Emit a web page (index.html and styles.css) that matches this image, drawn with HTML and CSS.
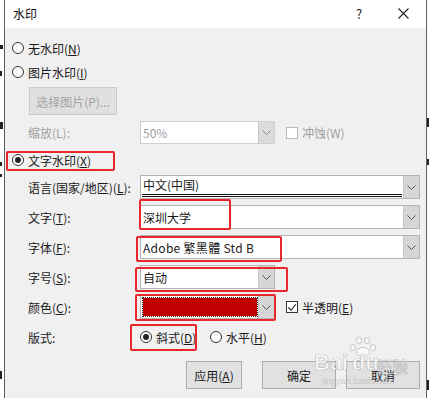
FILE: index.html
```html
<!DOCTYPE html>
<html lang="zh-CN">
<head>
<meta charset="utf-8">
<title>水印</title>
<link rel="stylesheet" href="styles.css">
</head>
<body>
<div class="page">
  <div class="gutter">
    <span class="frag f1"></span>
    <span class="frag f2"></span>
    <span class="frag f3"></span>
    <span class="frag f4"></span>
    <span class="frag f5"></span>
    <span class="frag f6"></span>
  </div>
  <div class="dialog">
    <div class="titlebar">
      <span class="title">水印</span>
      <span class="help">?</span>
      <svg class="close" width="11" height="11" viewBox="0 0 11 11"><path d="M0.5 0.5 L10.5 10.5 M10.5 0.5 L0.5 10.5" stroke="#222" stroke-width="1.1" fill="none"/></svg>
    </div>
    <div class="content">
      <div class="radio-row">
        <span class="radio"></span><span>无水印(<u>N</u>)</span>
      </div>
      <div class="radio-row">
        <span class="radio"></span><span>图片水印(<u>I</u>)</span>
      </div>
      <div class="btn-row">
        <div class="btn disabled">选择图片(P)...</div>
      </div>
      <div class="field-row scale-row">
        <span class="label disabled-text">缩放(L):</span>
        <div class="combo short disabled">
          <span class="combo-text disabled-text">50%</span>
          <span class="arrow"><svg width="9" height="5" viewBox="0 0 9 5"><polyline points="0.5,0.5 4.5,4.5 8.5,0.5" fill="none" stroke="#888" stroke-width="1"/></svg></span>
        </div>
        <span class="check"></span><span class="disabled-text">冲蚀(W)</span>
      </div>
      <div class="radio-row text-mark">
        <span class="radio on"></span><span>文字水印(<u>X</u>)</span>
        <span class="mark mark-textwm"></span>
      </div>
      <div class="form">
        <div class="field-row">
          <span class="label">语言(国家/地区)(<u>L</u>):</span>
          <div class="combo wide">
            <span class="combo-text lang-text">中文(中国)</span>
            <span class="dbl-line"></span>
            <span class="arrow"><svg width="9" height="5" viewBox="0 0 9 5"><polyline points="0.5,0.5 4.5,4.5 8.5,0.5" fill="none" stroke="#555" stroke-width="1"/></svg></span>
          </div>
        </div>
        <div class="field-row">
          <span class="label">文字(<u>T</u>):</span>
          <div class="combo wide">
            <span class="combo-text">深圳大学</span>
            <span class="arrow"><svg width="9" height="5" viewBox="0 0 9 5"><polyline points="0.5,0.5 4.5,4.5 8.5,0.5" fill="none" stroke="#555" stroke-width="1"/></svg></span>
            <span class="mark mark-text"></span>
          </div>
        </div>
        <div class="field-row">
          <span class="label">字体(<u>F</u>):</span>
          <div class="combo wide">
            <span class="combo-text font-name">Adobe 繁黑體 Std B</span>
            <span class="arrow"><svg width="9" height="5" viewBox="0 0 9 5"><polyline points="0.5,0.5 4.5,4.5 8.5,0.5" fill="none" stroke="#555" stroke-width="1"/></svg></span>
            <span class="mark mark-font"></span>
          </div>
        </div>
        <div class="field-row">
          <span class="label">字号(<u>S</u>):</span>
          <div class="combo short">
            <span class="combo-text">自动</span>
            <span class="arrow"><svg width="9" height="5" viewBox="0 0 9 5"><polyline points="0.5,0.5 4.5,4.5 8.5,0.5" fill="none" stroke="#555" stroke-width="1"/></svg></span>
            <span class="mark mark-size"></span>
          </div>
        </div>
        <div class="field-row">
          <span class="label">颜色(<u>C</u>):</span>
          <div class="combo short">
            <span class="swatch"></span>
            <span class="arrow"><svg width="9" height="5" viewBox="0 0 9 5"><polyline points="0.5,0.5 4.5,4.5 8.5,0.5" fill="none" stroke="#555" stroke-width="1"/></svg></span>
            <span class="mark mark-color"></span>
          </div>
          <span class="check on"><svg width="11" height="11" viewBox="0 0 11 11"><polyline points="1.5,5.5 4.5,8.5 9.5,2" fill="none" stroke="#222" stroke-width="1.2"/></svg></span><span>半透明(<u>E</u>)</span>
        </div>
        <div class="field-row layout-row">
          <span class="label">版式:</span>
          <div class="opt opt-diag">
            <span class="radio on"></span><span>斜式(<u>D</u>)</span>
            <span class="mark mark-diag"></span>
          </div>
          <div class="opt">
            <span class="radio"></span><span>水平(<u>H</u>)</span>
          </div>
        </div>
      </div>
      <div class="actions">
        <div class="btn act apply">应用(<u>A</u>)</div>
        <div class="btn act ok">确定</div>
        <div class="btn act cancel">取消</div>
      </div>
      <div class="wm">
        <span class="wm-paw">
          <span class="toe t1"></span><span class="toe t2"></span><span class="toe t3"></span><span class="toe t4"></span><span class="pad"></span>
        </span>
        <span class="wm-bai">Bai</span><span class="wm-du">du</span><span class="wm-jy">经验</span>
        <span class="wm-url">jingyan.baidu.com</span>
      </div>
    </div>
  </div>
  <div class="gutter gutter-right">
    <span class="frag r1"></span>
    <span class="frag r2"></span>
    <span class="frag r3"></span>
  </div>
</div>
</body>
</html>
```

FILE: styles.css
```css
* { box-sizing: border-box; }
html, body { margin: 0; padding: 0; }
body {
  width: 429px;
  height: 398px;
  overflow: hidden;
  background: #fff;
  font-family: "Noto Sans CJK SC", "Noto Sans", sans-serif;
  font-size: 12px;
  color: #1a1a1a;
}
u { text-decoration: underline; text-underline-offset: 1px; }

.page { display: flex; height: 398px; }
.gutter { width: 4px; display: flex; flex-direction: column; flex: none; }
.gutter-right { width: 2px; }
.frag { display: block; background: #222; }
.f1 { margin-top: 45px; width: 3px; height: 4px; }
.f2 { margin-top: 22px; width: 2px; height: 5px; }
.f3 { margin-top: 46px; width: 3px; height: 7px; }
.f4 { margin-top: 33px; width: 2px; height: 4px; }
.f5 { margin-top: 8px; width: 2px; height: 3px; }
.f6 { margin-top: 194px; width: 2px; height: 8px; }
.r1 { margin-top: 118px; width: 2px; height: 9px; }
.r2 { margin-top: 32px; width: 2px; height: 6px; }
.r3 { margin-top: 215px; width: 2px; height: 10px; }

.dialog {
  width: 423px;
  height: 398px;
  border-left: 1px solid #5f5f5f;
  border-right: 1px solid #5f5f5f;
  display: flex;
  flex-direction: column;
  flex: none;
}

.titlebar {
  height: 28px;
  background: #fff;
  display: flex;
  align-items: center;
  padding-left: 8px;
  padding-bottom: 2px;
}
.title { flex: 1; font-size: 12px; color: #111; }
.help { font-size: 13px; color: #222; width: 7px; margin-right: 35px; }
.close { margin-right: 17px; }

.content {
  position: relative;
  flex: 1;
  background: #f0f0f0;
  padding-top: 8px;
}

.radio-row {
  position: relative;
  height: 24px;
  display: flex;
  align-items: center;
  gap: 4px;
  padding-left: 7px;
}
.radio {
  width: 12px;
  height: 12px;
  border: 1px solid #333;
  border-radius: 50%;
  background: #fff;
  display: flex;
  align-items: center;
  justify-content: center;
  flex: none;
}
.radio.on::after {
  content: "";
  width: 6px;
  height: 6px;
  border-radius: 50%;
  background: #222;
}

.btn-row { margin-top: 3px; padding-left: 24px; }
.btn {
  height: 28px;
  border: 1px solid #adadad;
  background: #e1e1e1;
  display: flex;
  align-items: center;
  justify-content: center;
}
.btn.disabled {
  width: 88px;
  background: #e0e0e0;
  border-color: #cbcbcb;
  color: #a3a3a3;
}
.disabled-text { color: #a0a0a0; }

.field-row {
  position: relative;
  display: flex;
  align-items: center;
  height: 24px;
  padding-left: 23px;
}
.scale-row { margin-top: 6px; height: 23px; }
.label { width: 112px; flex: none; }

.combo {
  position: relative;
  height: 100%;
  border: 1px solid #b4b4b4;
  background: #fff;
  display: flex;
  align-items: center;
  flex: none;
}
.combo.short { width: 135px; }
.combo.wide { width: 280px; }
.combo.disabled { border-color: #cfcfcf; }
.combo-text { flex: 1; padding-left: 2px; white-space: nowrap; }
.lang-text { align-self: flex-start; line-height: 17px; }
.font-name { letter-spacing: 0.3px; }
.arrow {
  width: 16px;
  height: 100%;
  background: #d6d6d6;
  border-left: 1px solid #c8c8c8;
  display: flex;
  align-items: center;
  justify-content: center;
  flex: none;
}
.combo.disabled .arrow { background: #dcdcdc; }
.dbl-line {
  position: absolute;
  left: 1px;
  right: 17px;
  bottom: 1px;
  height: 3px;
  border-top: 1px solid #111;
  border-bottom: 1px solid #111;
}
.swatch {
  flex: 1;
  height: 18px;
  margin: 0 1px 0 2px;
  background: #c00000;
  outline: 1px dotted #222;
  outline-offset: 0;
}

.check {
  width: 12px;
  height: 12px;
  border: 1px solid #333;
  background: #fff;
  margin-left: 11px;
  margin-right: 4px;
  display: flex;
  align-items: center;
  justify-content: center;
  flex: none;
}
.scale-row .check { border-color: #b8b8b8; }

.text-mark { margin-top: 6px; height: 20px; }

.form {
  margin-top: 5px;
  display: flex;
  flex-direction: column;
  gap: 6px;
}

.layout-row .opt {
  position: relative;
  display: flex;
  align-items: center;
  gap: 4px;
}
.opt-diag { width: 70px; }

.mark {
  position: absolute;
  border: 2.5px solid #e8262b;
  border-radius: 2px;
  pointer-events: none;
}
.mark-textwm { left: 1px; top: 1px; width: 109px; height: 20px; }
.mark-text { left: -2px; top: -7px; width: 92px; height: 31px; }
.mark-font { left: -5px; top: 0px; width: 146px; height: 26px; }
.mark-size { left: -6px; top: 1px; width: 153px; height: 25px; }
.mark-color { left: -6px; top: -2px; width: 141px; height: 27px; }
.mark-diag { left: -10px; top: -5px; width: 67px; height: 27px; }

.actions {
  margin-top: 12px;
  display: flex;
  height: 28px;
}
.act { height: 28px; }
.apply { margin-left: 181px; width: 56px; }
.ok { margin-left: 20px; width: 74px; }
.cancel { margin-left: 10px; width: 74px; }

.wm {
  position: absolute;
  left: 305px;
  top: 308px;
  width: 100px;
  height: 56px;
  pointer-events: none;
  color: rgba(255,255,255,0.8);
  -webkit-text-stroke: 0.7px rgba(140,140,140,0.5);
  font-family: "Liberation Sans", sans-serif;
  font-weight: bold;
}
.wm-bai { position: absolute; left: 4px; top: 14px; font-size: 22px; }
.wm-du { position: absolute; left: 42px; top: 14px; font-size: 22px; }
.wm-jy { position: absolute; left: 66px; top: 18px; font-size: 16px; font-family: "Noto Sans CJK SC", sans-serif; font-weight: normal; }
.wm-url {
  position: absolute; left: 12px; top: 40px; font-size: 9px; font-weight: normal;
  -webkit-text-stroke: 0; color: rgba(170,170,170,0.55);
}
.wm-paw { position: absolute; left: 38px; top: 0; width: 30px; height: 26px; }
.toe, .pad {
  position: absolute;
  border-radius: 50%;
  background: rgba(255,255,255,0.6);
  border: 1px solid rgba(150,150,150,0.45);
}
.t1 { left: 2px; top: 8px; width: 6px; height: 7px; }
.t2 { left: 8px; top: 1px; width: 6px; height: 7px; }
.t3 { left: 16px; top: 1px; width: 6px; height: 7px; }
.t4 { left: 22px; top: 8px; width: 6px; height: 7px; }
.pad { left: 8px; top: 11px; width: 14px; height: 10px; }
```
